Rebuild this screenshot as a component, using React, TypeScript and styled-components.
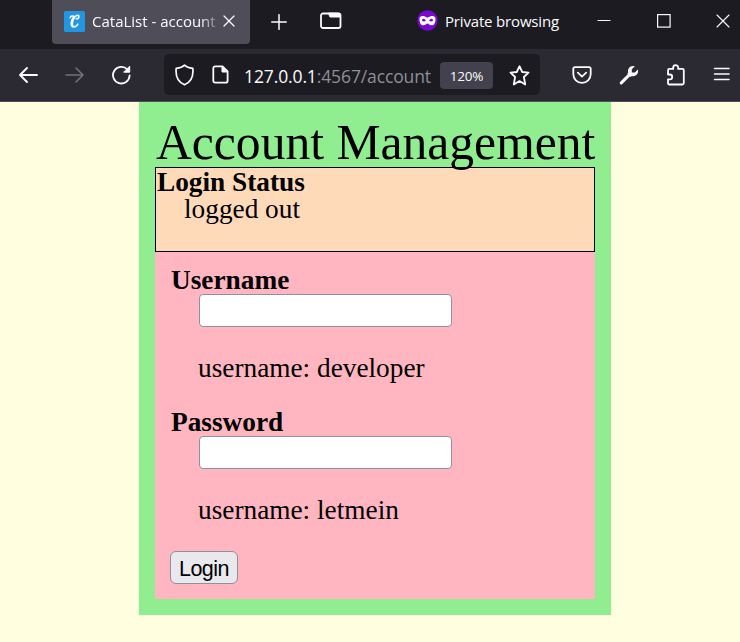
import React from "react";
import styled, { createGlobalStyle } from "styled-components";

const GlobalStyle = createGlobalStyle`
  *, *::before, *::after { box-sizing: border-box; }
  html, body { margin: 0; padding: 0; }
  body { background: #ffffe0; overflow: hidden; }
`;

const Window = styled.div`
  width: 740px;
  height: 642px;
  display: flex;
  flex-direction: column;
  background: #ffffe0;
  overflow: hidden;
`;

const TabBar = styled.header`
  display: flex;
  align-items: flex-start;
  height: 49px;
  padding-left: 52px;
  background: #1c1b22;
  color: #fbfbfe;
  font-family: "Open Sans", "Noto Sans", sans-serif;
  flex: none;
`;

const Tab = styled.div`
  display: flex;
  width: 198px;
  height: 43.5px;
  padding: 0 14px 3px 12px;
  align-items: center;
  border-radius: 0 0 4px 4px;
  background: #4f4e58;
`;

const TabTitle = styled.span`
  width: 125px;
  margin: 2px 0 0 7px;
  overflow: hidden;
  white-space: nowrap;
  font-size: 15px;
  line-height: 22px;
  mask-image: linear-gradient(to right, #000 108px, transparent 130px);
`;

const Icon = styled.svg<{ $left?: number; $top?: number }>`
  display: block;
  flex: none;
  fill: none;
  stroke: currentColor;
  stroke-linecap: round;
  stroke-linejoin: round;
  margin-left: ${(p) => p.$left ?? 0}px;
  margin-top: ${(p) => p.$top ?? 0}px;
`;

const PrivateLabel = styled.span`
  width: 114px;
  margin: 10px 0 0 7px;
  white-space: nowrap;
  font-size: 15px;
  line-height: 22px;
  letter-spacing: -0.17px;
`;

const Toolbar = styled.nav`
  display: flex;
  align-items: center;
  height: 53px;
  padding: 0 0 1px 18px;
  background: #2b2a33;
  border-bottom: 1px solid #504f59;
  color: #fbfbfe;
  flex: none;
`;

const AddressBar = styled.div`
  display: flex;
  align-items: center;
  width: 376px;
  height: 41px;
  margin-left: 31px;
  padding-left: 10px;
  border-radius: 5px;
  background: #1c1b22;
`;

const Url = styled.span`
  width: 187px;
  margin: 2px 0 0 15px;
  white-space: nowrap;
  color: #8f8f95;
  font: 17.5px/24px "Open Sans", "Noto Sans", sans-serif;
  letter-spacing: -0.12px;
`;

const Host = styled.span`
  color: #fbfbfe;
`;

const ZoomLevel = styled.span`
  width: 53px;
  height: 27px;
  margin: 1px 0 0 9px;
  border-radius: 4px;
  background: #42414d;
  text-align: center;
  font: 13.5px/28px "Open Sans", "Noto Sans", sans-serif;
  letter-spacing: -0.2px;
`;

const Page = styled.main`
  width: 472px;
  height: 513px;
  margin-left: 139px;
  padding: 16px;
  background: #90ee90;
  color: #000;
  font: 27.3px/27px "Liberation Serif", "Times New Roman", serif;
`;

const Title = styled.h1`
  height: 49px;
  margin: 0;
  padding: 1px 0 0 1px;
  font-size: 49.6px;
  line-height: 48px;
  font-weight: 400;
  white-space: nowrap;
`;

const Status = styled.dl`
  height: 85px;
  margin: 0;
  padding: 1px 1px;
  border: 1px solid #000;
  background: #ffdab9;
`;

const Term = styled.dt`
  font-weight: 700;
`;

const Description = styled.dd`
  margin: 0 0 0 27px;
`;

const LoginForm = styled.form`
  height: 347px;
  padding: 15px 16px 16px;
  background: #ffb6c1;
`;

const Fields = styled.dl`
  margin: 0;
`;

const Field = styled.div`
  height: 142px;
`;

const TextInput = styled.input`
  display: block;
  width: 253px;
  height: 33px;
  margin-left: 1px;
  padding: 2px 4px;
  border: 1px solid #8f8f9d;
  border-radius: 4px;
  background: #fff;
  font: 22px "Liberation Sans", Arial, sans-serif;
`;

const Hint = styled.p`
  margin: 28px 0 0;
`;

const LoginButton = styled.button`
  display: block;
  width: 68px;
  height: 33px;
  margin-left: -1px;
  padding: 2px 0 0;
  border: 1.5px solid #8f8f9d;
  border-radius: 6px;
  background: #e9e9ed;
  color: #000;
  font: 21.5px/28px "Liberation Sans", Arial, sans-serif;
  letter-spacing: -0.5px;
`;

const fields = [
  { label: "Username", type: "text", hint: "username: developer" },
  { label: "Password", type: "password", hint: "username: letmein" },
];

export default function App() {
  return (
    <>
      <GlobalStyle />
      <Window>
        <TabBar>
          <Tab>
            <Icon width="21" height="21" viewBox="0 0 21 21" $top={2}>
              <rect width="21" height="21" rx="1.5" fill="#2196e3" stroke="none" />
              <path d="M6.3 6.6C6.2 5.2 8 4.8 9.6 5.2M14.9 5.2C14.4 3.4 10.5 4.6 8.6 8.2C6.7 11.8 6.8 15.6 9.5 15.8C11.6 15.9 13.2 14.6 13.8 13.2M14.9 5.2C15.2 6.8 13.5 8.4 12.2 7.6" strokeWidth="1.6" />
              <path d="M10 6.5C7.8 9.5 7.4 13.4 8.6 15.2" strokeWidth="2.4" />
            </Icon>
            <TabTitle>CataList - account</TabTitle>
            <Icon width="12" height="12" viewBox="0 0 12 12" $left={6} $top={2} strokeWidth="1.3">
              <path d="M1 1L11 11M11 1L1 11" />
            </Icon>
          </Tab>
          <Icon width="16" height="16" viewBox="0 0 16 16" $left={20.5} $top={14} strokeWidth="1.5">
            <path d="M8 .7V15.3M.7 8H15.3" />
          </Icon>
          <Icon width="22" height="17" viewBox="0 0 22 17" $left={33.5} $top={12} strokeWidth="1.8">
            <rect x="1" y="1.5" width="19.5" height="14.5" rx="2" />
            <path d="M8.5 1.5L10 5H20V2.5L19 1.5Z" fill="currentColor" strokeWidth="1" />
          </Icon>
          <Icon width="21" height="21" viewBox="0 0 21 21" $left={75} $top={10}>
            <circle cx="10.5" cy="10.5" r="10.2" fill="#7a08d0" stroke="none" />
            <path d="M2.5 8.7C2.5 5.4 6.8 5.2 10.5 7.8C14.2 5.2 18.5 5.4 18.5 8.7C18.5 13.2 17 15.3 14.6 15.3C12.7 15.3 11.6 13.5 10.5 13.5S8.3 15.3 6.4 15.3C4 15.3 2.5 13.2 2.5 8.7Z" fill="#fff" stroke="none" />
            <path d="M4.7 10.2Q6.8 7.4 8.9 10.4Q6.7 12.5 4.7 10.2ZM16.3 10.2Q14.2 7.4 12.1 10.4Q14.3 12.5 16.3 10.2Z" fill="#7a08d0" stroke="none" />
          </Icon>
          <PrivateLabel>Private browsing</PrivateLabel>
          <Icon width="14" height="14" viewBox="0 0 14 14" $left={38} $top={14} strokeWidth="1.1">
            <path d="M1 6.5H13" />
          </Icon>
          <Icon width="14" height="14" viewBox="0 0 14 14" $left={46} $top={14} strokeWidth="1.2">
            <rect x=".6" y=".6" width="12.5" height="12.5" strokeLinejoin="miter" />
          </Icon>
          <Icon width="14" height="14" viewBox="0 0 14 14" $left={45} $top={14} strokeWidth="1.1">
            <path d="M1 1L13 13M13 1L1 13" />
          </Icon>
        </TabBar>
        <Toolbar>
          <Icon width="20" height="18" viewBox="0 0 20 18" strokeWidth="1.9">
            <path d="M2 9H19M9 2L2 9L9 16" />
          </Icon>
          <Icon width="20" height="18" viewBox="0 0 20 18" $left={27} strokeWidth="1.6" color="#73727a">
            <path d="M1 9H18M11 2L18 9L11 16" />
          </Icon>
          <Icon width="22" height="20" viewBox="0 0 22 20" $left={26} strokeWidth="1.8">
            <path d="M18.6 10.5A8.3 8.3 0 1 1 16.4 4.5" />
            <path d="M18.7 1.5V7.2H13Z" fill="currentColor" strokeWidth="1" />
          </Icon>
          <AddressBar>
            <Icon width="21" height="22" viewBox="0 0 21 22" strokeWidth="1.7">
              <path d="M10.5 1.2C8.5 3.2 5.5 4 2.2 4.3C1.4 11.8 4 18 10.5 20.8C17 18 19.6 11.8 18.8 4.3C15.5 4 12.5 3.2 10.5 1.2Z" />
            </Icon>
            <Icon width="17" height="19" viewBox="0 0 17 19" $left={17} strokeWidth="1.8">
              <path d="M3.3 1.3H10.5L15.6 6.5V15.7Q15.6 17.7 13.6 17.7H3.3Q1.3 17.7 1.3 15.7V3.3Q1.3 1.3 3.3 1.3Z" />
              <path d="M10 1.5V7H15.4Z" fill="currentColor" strokeWidth="1" />
            </Icon>
            <Url><Host>127.0.0.1</Host>:4567/account</Url>
            <ZoomLevel>120%</ZoomLevel>
            <Icon width="21" height="21" viewBox="0 0 21 21" $left={15.5} $top={1} strokeWidth="1.8">
              <path d="M10.5 1.2L13.2 7L19.5 7.7L14.9 12L16.2 19.5L10.5 16.1L4.8 19.5L6.1 12L1.5 7.7L7.8 7Z" />
            </Icon>
          </AddressBar>
          <Icon width="20" height="18" viewBox="0 0 20 18" $left={32} strokeWidth="1.8">
            <path d="M3 1.2H17Q18.7 1.2 18.7 3V8C18.7 13.2 14.8 16.8 10 16.8S1.3 13.2 1.3 8V3Q1.3 1.2 3 1.2ZM5.8 6.7L10 10.6L14.2 6.7" />
          </Icon>
          <Icon width="20" height="20" viewBox="0 0 20 20" $left={27}>
            <path d="M2.3 17.9L10.8 9.4" strokeWidth="3" />
            <path d="M15.8 1.3C11.5.2 8.2 3.5 9.2 7.6L8.3 8.6L11.6 11.9L12.8 11C16.8 12 20 8.6 18.9 4.6L15.9 7.6H12.8V4.3Z" fill="currentColor" stroke="none" />
          </Icon>
          <Icon width="20" height="22" viewBox="0 0 20 22" $left={27} strokeWidth="1.8">
            <path d="M2.1 8V6Q2.1 4.9 3.2 4.9H7.2V3.6A2.5 2.5 0 0 1 12.2 3.6V4.9H16.4Q17.8 4.9 17.8 6.3V19Q17.8 20.5 16.3 20.5H3.4Q2 20.5 2 19V15.3H3.8A2.4 2.4 0 0 0 3.8 10.5H2V8" />
          </Icon>
          <Icon width="18" height="14" viewBox="0 0 18 14" $left={27} $top={-1} strokeWidth="1.5">
            <path d="M1.5 1.5H16M1.5 7H16M1.5 12.5H16" />
          </Icon>
        </Toolbar>
        <Page>
          <Title>Account Management</Title>
          <Status>
            <Term>Login Status</Term>
            <Description>logged out</Description>
          </Status>
          <LoginForm onSubmit={(event) => event.preventDefault()}>
            <Fields>
              {fields.map((field) => (
                <Field key={field.label}>
                  <Term>{field.label}</Term>
                  <Description>
                    <TextInput type={field.type} aria-label={field.label} />
                    <Hint>{field.hint}</Hint>
                  </Description>
                </Field>
              ))}
            </Fields>
            <LoginButton type="submit">Login</LoginButton>
          </LoginForm>
        </Page>
      </Window>
    </>
  );
}
